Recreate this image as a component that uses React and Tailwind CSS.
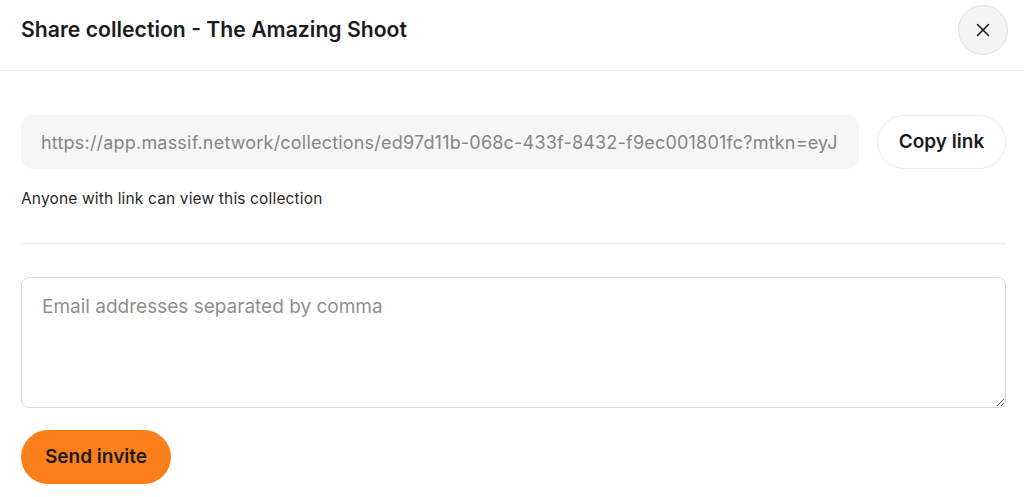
import React from "react";

export default function App() {
  return (
    <div className="w-[1024px] h-[497px] bg-white overflow-hidden" style={{ fontFamily: "Inter, 'Noto Sans', sans-serif" }}>
      <div className="h-[71px] flex items-center justify-between pl-[21px] pr-[16px] border-b border-[#ececec]">
        <h1 className="text-[21.2px] font-semibold text-[#1c1c1c] -mt-[10px]">Share collection - The Amazing Shoot</h1>
        <button className="w-[50px] h-[50px] rounded-full bg-[#f4f4f4] border-[1.5px] border-[#e0e0e0] flex items-center justify-center -mt-[10px]">
          <svg width="16" height="16" viewBox="0 0 16 16" fill="none" stroke="#1c1c1c" strokeWidth="1.6" strokeLinecap="round">
            <path d="M2.5 2.5 L13.5 13.5 M13.5 2.5 L2.5 13.5" />
          </svg>
        </button>
      </div>
      <div className="px-[21px] pr-[18px]">
        <div className="flex gap-[18px] mt-[44px]">
          <div className="flex-1 h-[54px] rounded-[12px] bg-[#f6f6f6] flex items-center px-[20px] overflow-hidden">
            <span className="whitespace-nowrap overflow-hidden text-[18px] tracking-[0.2px] text-[#858585]">https://app.massif.network/collections/ed97d11b-068c-433f-8432-f9ec001801fc?mtkn=eyJ</span>
          </div>
          <button className="w-[129px] h-[54px] rounded-full border border-[#ececec] bg-white text-[19px] font-semibold text-[#1c1c1c]">Copy link</button>
        </div>
        <p className="mt-[18px] text-[15.5px] tracking-[0.15px] text-[#2a2a2a]">Anyone with link can view this collection</p>
        <div className="mt-[33px] border-t border-[#ececec]" />
        <textarea
          className="mt-[33px] block w-full h-[131px] rounded-[8px] border border-[#dadada] px-[20px] py-[15px] text-[19px] text-[#1c1c1c] placeholder:text-[#8f8f8f] resize-y outline-none"
          placeholder="Email addresses separated by comma"
        />
        <button className="mt-[22px] w-[150px] h-[54px] rounded-full bg-[#fd7f1c] text-[19px] font-semibold text-[#1c1c1c]">Send invite</button>
      </div>
    </div>
  );
}
